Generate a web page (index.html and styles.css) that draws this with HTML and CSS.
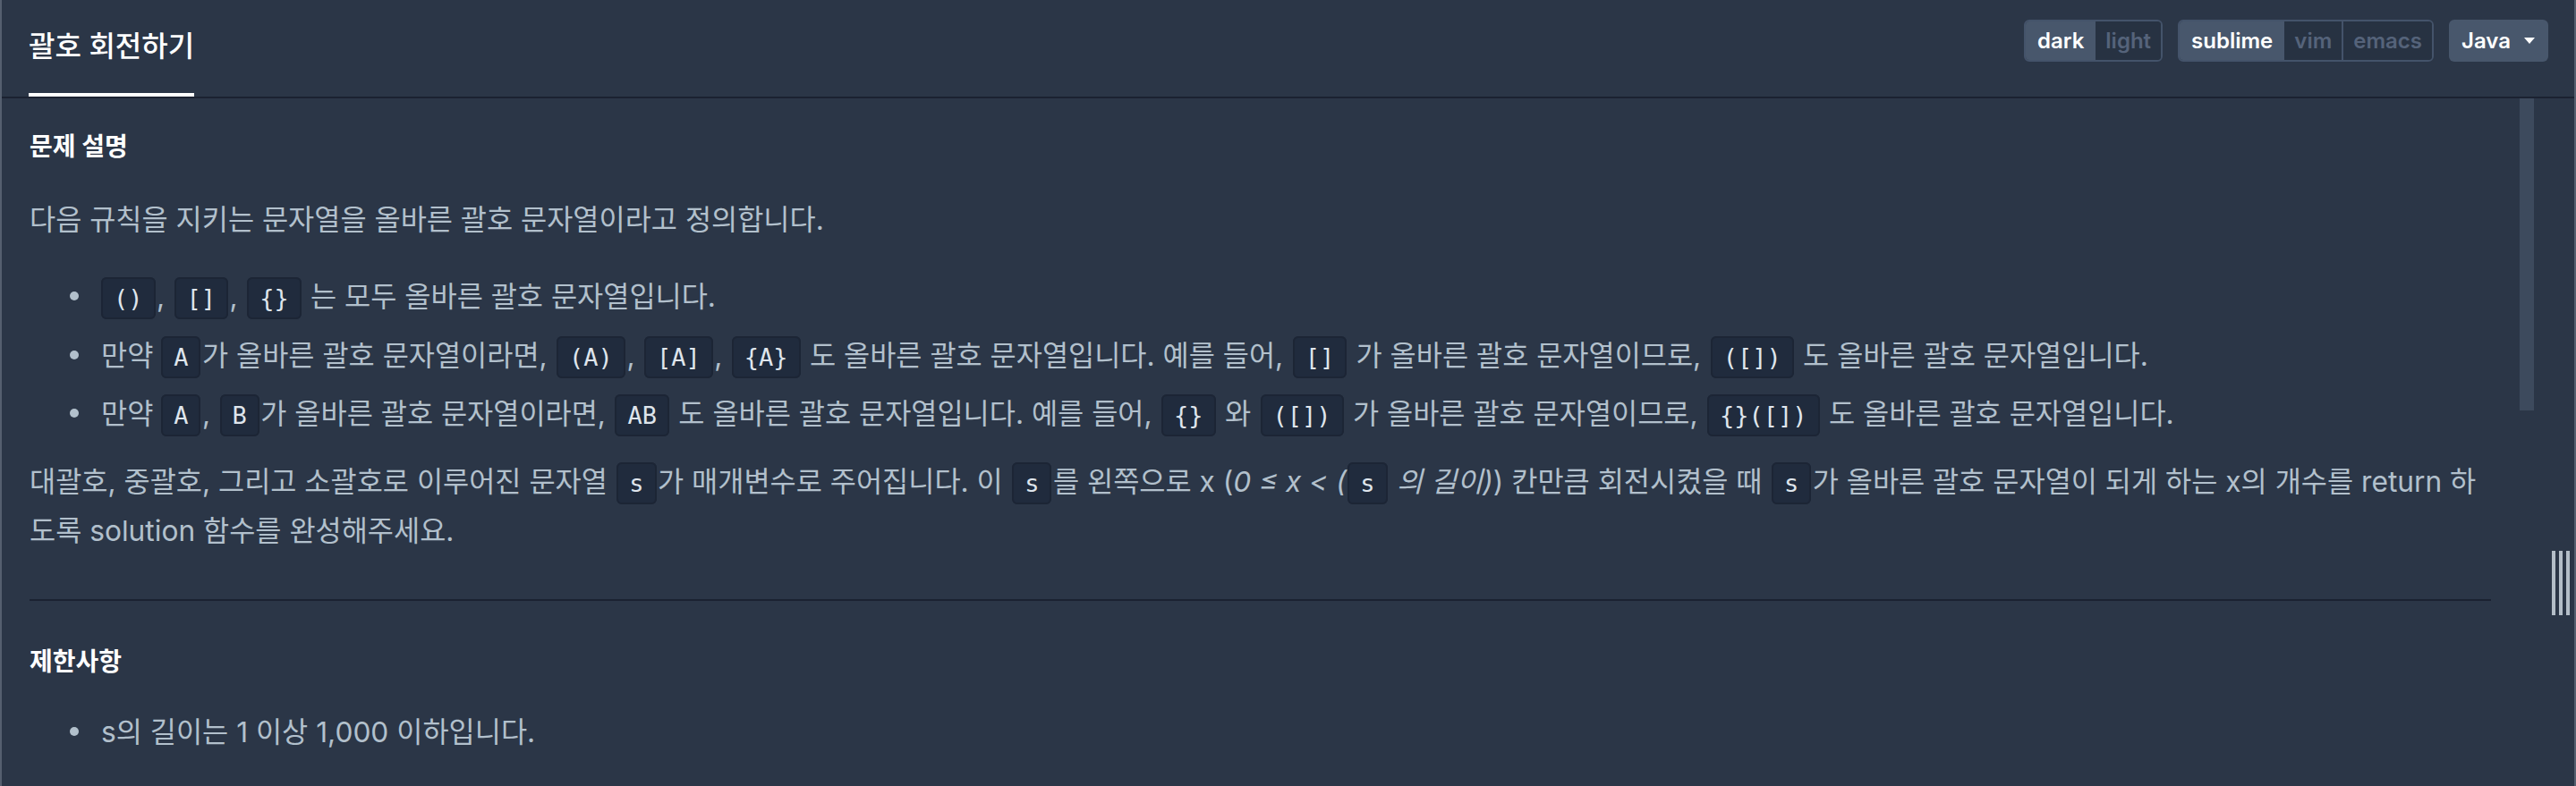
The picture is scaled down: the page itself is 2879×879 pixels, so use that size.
FILE: index.html
```html
<!DOCTYPE html>
<html lang="ko">
<head>
    <meta charset="UTF-8">
    <meta name="viewport" content="width=device-width, initial-scale=1.0">
    <title>괄호 회전하기</title>
    <link rel="stylesheet" href="styles.css">
</head>
<body>

<div class="app">
    <!-- 상단 탭 / 설정 -->
    <header class="topbar">
        <nav class="tabs">
            <a class="tab active">괄호 회전하기</a>
        </nav>
        <div class="toolbar">
            <div class="btn-group">
                <button class="on">dark</button>
                <button>light</button>
            </div>
            <div class="btn-group">
                <button class="on">sublime</button>
                <button>vim</button>
                <button>emacs</button>
            </div>
            <button class="lang">Java <span class="caret"></span></button>
        </div>
    </header>

    <div class="workspace">
        <!-- 문제 설명 -->
        <div class="problem">
            <h4 class="section-title">문제 설명</h4>
            <p>다음 규칙을 지키는 문자열을 올바른 괄호 문자열이라고 정의합니다.</p>
            <ul>
                <li><code>()</code>, <code>[]</code>, <code>{}</code> 는 모두 올바른 괄호 문자열입니다.</li>
                <li>만약 <code>A</code>가 올바른 괄호 문자열이라면, <code>(A)</code>, <code>[A]</code>, <code>{A}</code> 도 올바른 괄호 문자열입니다. 예를 들어, <code>[]</code> 가 올바른 괄호 문자열이므로, <code>([])</code> 도 올바른 괄호 문자열입니다.</li>
                <li>만약 <code>A</code>, <code>B</code>가 올바른 괄호 문자열이라면, <code>AB</code> 도 올바른 괄호 문자열입니다. 예를 들어, <code>{}</code> 와 <code>([])</code> 가 올바른 괄호 문자열이므로, <code>{}([])</code> 도 올바른 괄호 문자열입니다.</li>
            </ul>
            <p>대괄호, 중괄호, 그리고 소괄호로 이루어진 문자열 <code>s</code>가 매개변수로 주어집니다. 이 <code>s</code>를 왼쪽으로 x (<em>0 ≤ x &lt; (<code>s</code> 의 길이)</em>) 칸만큼 회전시켰을 때 <code>s</code>가 올바른 괄호 문자열이 되게 하는 x의 개수를 return 하도록 solution 함수를 완성해주세요.</p>

            <hr>

            <h4 class="section-title limits">제한사항</h4>
            <ul>
                <li>s의 길이는 1 이상 1,000 이하입니다.</li>
            </ul>
        </div>

        <div class="scrollbar"><div class="thumb"></div></div>

        <div class="gutter">
            <div class="grip"><span></span><span></span><span></span></div>
        </div>
    </div>
</div>

</body>
</html>
```

FILE: styles.css
```css
body {
    margin: 0;
    background-color: #2b3647;
    font-family: "Inter", "Noto Sans CJK KR", sans-serif;
    overflow: hidden;
}
.app {
    height: 879px;
    border-left: 2px solid #555f6f;
    border-right: 2px solid #555f6f;
    background-color: #2b3647;
}
.topbar {
    display: flex;
    justify-content: space-between;
    height: 108px;
    padding: 0 29px 0 30px;
    border-bottom: 2px solid #1b2231;
}
.tab {
    display: block;
    box-sizing: border-box;
    height: 108px;
    padding-top: 32px;
    line-height: 40px;
    font-size: 32px;
    font-weight: 500;
    color: #fff;
    border-bottom: 4px solid #fff;
}
.toolbar {
    display: flex;
    align-items: flex-start;
    gap: 17px;
    padding-top: 22px;
}
.btn-group {
    display: flex;
    border: 2px solid #44536a;
    border-radius: 6px;
    overflow: hidden;
}
.btn-group button {
    height: 43px;
    padding: 0 11px;
    border: none;
    background-color: #273242;
    color: #55637a;
    font-family: inherit;
    font-size: 24px;
    font-weight: 600;
}
.btn-group button + button {
    border-left: 2px solid #44536a;
}
.btn-group button.on {
    padding: 0 13px;
    background-color: #48576c;
    color: #fff;
}
.btn-group button.on + button {
    border-left: none;
}
.lang {
    display: flex;
    align-items: center;
    gap: 15px;
    height: 47px;
    padding: 0 15px 0 14px;
    border: none;
    border-radius: 6px;
    background-color: #48576c;
    color: #fff;
    font-family: inherit;
    font-size: 24px;
    font-weight: 600;
}
.caret {
    width: 0;
    height: 0;
    border-top: 7px solid #fff;
    border-left: 6px solid transparent;
    border-right: 6px solid transparent;
}

.workspace {
    display: flex;
    height: 769px;
}
.problem {
    flex: 1;
    min-width: 0;
    padding: 34px 0 0 31px;
    font-size: 31.7px;
    line-height: 55px;
    color: #b2c0cc;
}
.section-title {
    margin: 0 0 34px;
    font-size: 28px;
    line-height: 40px;
    font-weight: 700;
    color: #fff;
}
.section-title.limits {
    margin-bottom: 28px;
}
.problem p {
    margin: 0;
}
.problem ul {
    margin: 31px 0 21px;
    padding-left: 80px;
    list-style: none;
}
.problem li {
    position: relative;
}
/* 불릿 점 */
.problem li::before {
    content: "";
    position: absolute;
    left: -35px;
    top: 22px;
    width: 10px;
    height: 10px;
    border-radius: 50%;
    background-color: #b2c0cc;
}
.problem li + li {
    margin-top: 10.5px;
}
.problem code {
    margin: 0 1.5px;
    padding: 6px 12px;
    border: 2px solid #1c2535;
    border-radius: 6px;
    background-color: #202b3d;
    color: #dfe5ec;
    font-family: "DejaVu Sans Mono", monospace;
    font-size: 27px;
    line-height: 1;
}
.problem li > code:first-child {
    margin-left: 0;
}
.problem em code {
    font-style: normal;
}
hr {
    margin: 49px 0 48px;
    border: none;
    border-top: 2px solid #1b2231;
}

.scrollbar {
    width: 16px;
    margin-left: 32px;
}
.thumb {
    height: 349px;
    background-color: #3d4a5d;
}
.gutter {
    width: 45px;
    box-sizing: border-box;
    padding: 506px 0 0 20px;
}
.grip {
    display: flex;
    gap: 4px;
}
.grip span {
    width: 4px;
    height: 72px;
    background-color: #b4bec8;
}
```
